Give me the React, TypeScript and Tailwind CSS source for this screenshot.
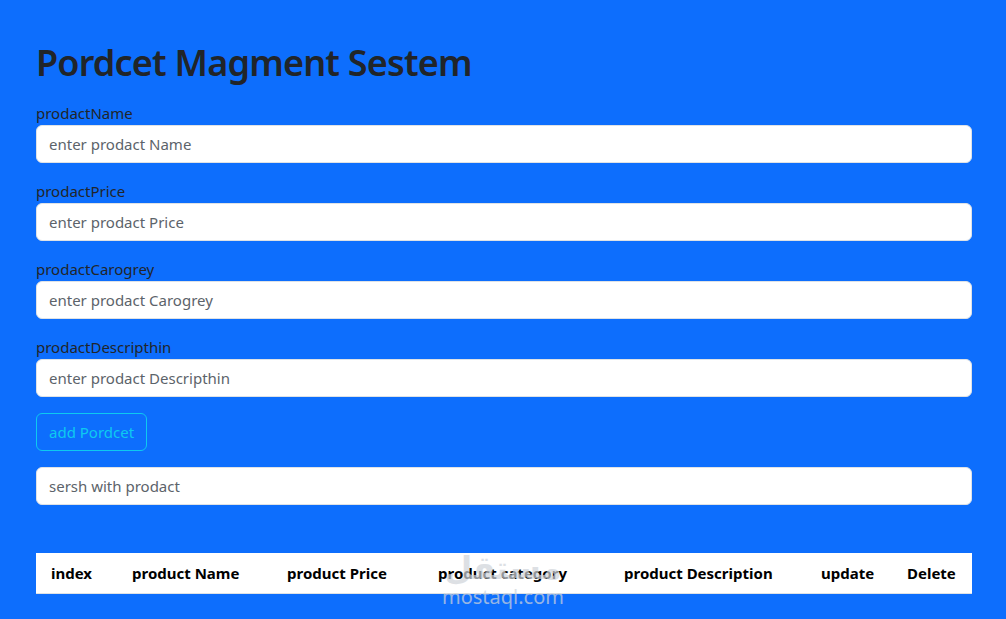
import React from "react"

const fields = [
  { label: "prodactName", placeholder: "enter prodact Name" },
  { label: "prodactPrice", placeholder: "enter prodact Price" },
  { label: "prodactCarogrey", placeholder: "enter prodact Carogrey" },
  { label: "prodactDescripthin", placeholder: "enter prodact Descripthin" },
]

const columns = [
  { title: "index", w: "w-[81px]" },
  { title: "product Name", w: "w-[155px]" },
  { title: "product Price", w: "w-[151px]" },
  { title: "product category", w: "w-[186px]" },
  { title: "product Description", w: "w-[197px]" },
  { title: "update", w: "w-[86px]" },
  { title: "Delete", w: "w-[80px]" },
]

export default function App() {
  return (
    <div
      className="relative min-h-[619px] w-full overflow-hidden bg-[#0d6efd] text-[#212529]"
      style={{ fontFamily: '"Noto Sans", "Open Sans", sans-serif' }}
    >
      <div className="ml-[36px] w-[936px] pt-[39px]">
        <h1 className="mb-[14px] text-[36px] font-semibold leading-[48px] tracking-[-0.8px]">Pordcet Magment Sestem</h1>

        {fields.map((f) => (
          <div key={f.label} className="mb-4">
            <label className="block text-[15px] leading-[24px]">{f.label}</label>
            <input
              className="block h-[38px] w-full rounded-[6px] border border-[#dee2e6] bg-white px-3 text-[15px] text-[#212529] outline-none placeholder:text-[#5c636a]"
              placeholder={f.placeholder}
            />
          </div>
        ))}

        <button className="mb-4 h-[38px] rounded-[6px] border border-[#0dcaf0] px-3 text-[15px] text-[#0dcaf0]">
          add Pordcet
        </button>

        <input
          className="block h-[38px] w-full rounded-[6px] border border-[#dee2e6] bg-white px-3 text-[15px] text-[#212529] outline-none placeholder:text-[#5c636a]"
          placeholder="sersh with prodact"
        />

        <div className="mt-[48px] flex h-[41px] items-center border-b border-[#dee2e6] bg-white">
          {columns.map((c) => (
            <div key={c.title} className={`${c.w} shrink-0 px-[15px] text-[15px] font-bold text-black`}>
              {c.title}
            </div>
          ))}
        </div>
      </div>

      <div className="pointer-events-none absolute left-[440px] top-[547px] flex w-[126px] flex-col items-center text-[#d0d4da] opacity-70">
        <span className="text-[32px] font-bold leading-[40px]" style={{ fontFamily: '"Noto Sans", "DejaVu Sans", sans-serif' }}>
          مستقل
        </span>
        <span className="text-[20px] leading-[20px]">mostaql.com</span>
      </div>
    </div>
  )
}
